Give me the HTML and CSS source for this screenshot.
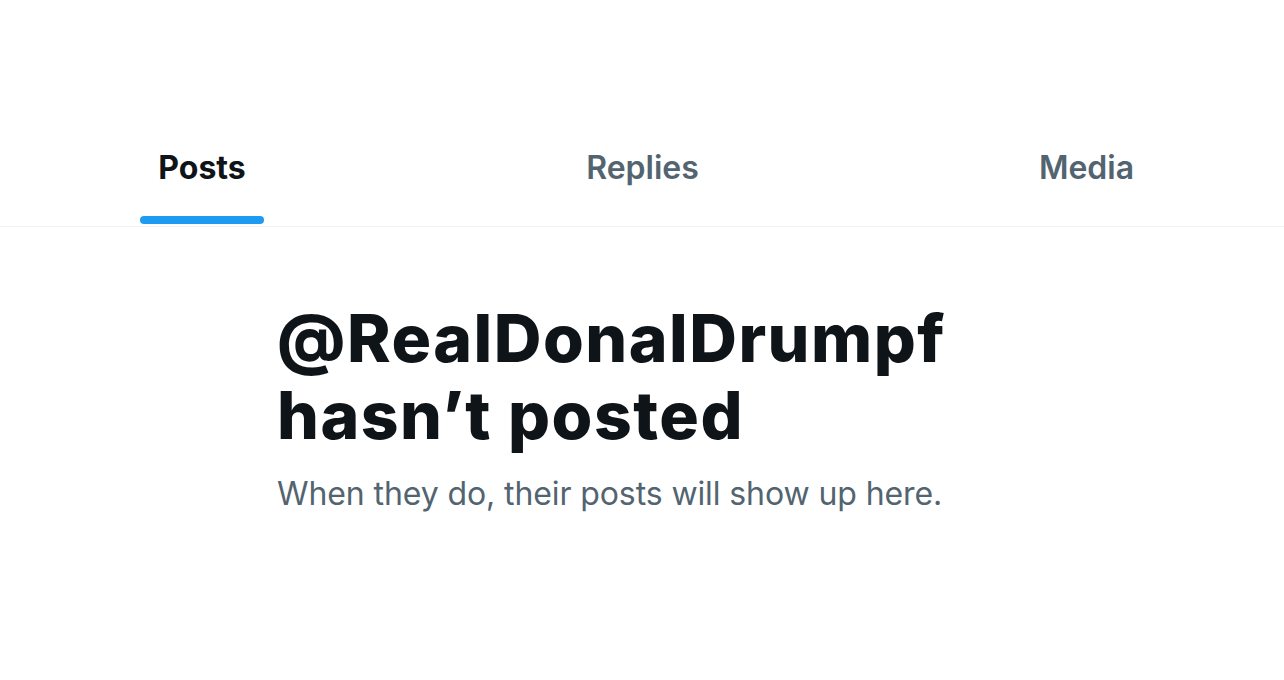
FILE: index.html
```html
<!DOCTYPE html>
<html>
<head>
<meta charset="utf-8">
<link rel="stylesheet" href="styles.css">
</head>
<body>
<div class="page">
  <nav class="tabs">
    <div class="tab tab-posts active"><span class="tab-label">Posts</span><span class="indicator"></span></div>
    <div class="tab tab-replies"><span class="tab-label">Replies</span></div>
    <div class="tab tab-media"><span class="tab-label">Media</span></div>
  </nav>
  <section class="empty">
    <h1 class="empty-title">@RealDonalDrumpf hasn’t posted</h1>
    <p class="empty-sub">When they do, their posts will show up here.</p>
  </section>
</div>
</body>
</html>
```
FILE: styles.css
```css
html, body {
  margin: 0;
  padding: 0;
  background: #ffffff;
}
body {
  font-family: Inter, "Noto Sans", "Liberation Sans", sans-serif;
  color: #0f1419;
}
.page {
  width: 1284px;
  height: 680px;
  padding-top: 114px;
  box-sizing: border-box;
}
.tabs {
  display: grid;
  grid-template-columns: 404px 477px 1fr;
  height: 113px;
  border-bottom: 1px solid #eff3f4;
  box-sizing: border-box;
}
.tab {
  position: relative;
  display: flex;
  align-items: center;
  justify-content: center;
  padding-bottom: 4px;
}
.tab-media {
  padding-left: 8px;
}
.tab-label {
  font-size: 32px;
  font-weight: 600;
  color: #536471;
  line-height: 40px;
}
.tab.active .tab-label {
  color: #0f1419;
  font-weight: 700;
}
.indicator {
  position: absolute;
  bottom: 2px;
  left: 50%;
  width: 124px;
  margin-left: -62px;
  height: 8px;
  border-radius: 9999px;
  background: #1d9bf0;
}
.empty {
  padding: 73px 0 0 277px;
  width: 760px;
}
.empty-title {
  margin: 0;
  font-size: 66px;
  line-height: 77px;
  font-weight: 800;
  color: #0f1419;
  letter-spacing: 1.5px;
}
.empty-sub {
  margin: 18px 0 0;
  font-size: 32px;
  line-height: 43px;
  font-weight: 400;
  color: #536471;
  letter-spacing: -0.1px;
}
```
